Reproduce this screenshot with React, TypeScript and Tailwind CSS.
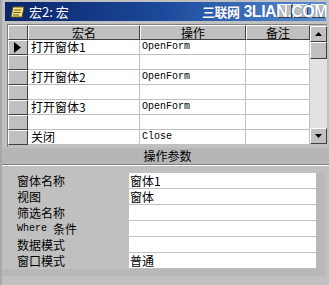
import React from 'react';

const cjk = "font-['SimSun','Noto_Sans_CJK_SC',sans-serif]";

const rows: { name: string; action: string }[] = [
  { name: '打开窗体1', action: 'OpenForm' },
  { name: '', action: '' },
  { name: '打开窗体2', action: 'OpenForm' },
  { name: '', action: '' },
  { name: '打开窗体3', action: 'OpenForm' },
  { name: '', action: '' },
  { name: '关闭', action: 'Close' },
];

const params: { label: string; value: string }[] = [
  { label: '窗体名称', value: '窗体1' },
  { label: '视图', value: '窗体' },
  { label: '筛选名称', value: '' },
  { label: 'Where 条件', value: '' },
  { label: '数据模式', value: '' },
  { label: '窗口模式', value: '普通' },
];

const raised =
  'border border-t-white border-l-white border-r-[#404040] border-b-[#404040] bg-[#c0c0c0]';

const TitleBar = () => (
  <div className="relative mx-[3px] mt-[2px] flex h-[19px] items-center bg-gradient-to-r from-[#0a246a] via-[#1c4a9c] to-[#5a8fd6] pl-[5px]">
    <svg width="16" height="14" viewBox="0 0 16 14" aria-hidden="true">
      <path d="M3 2 L14 2 L12 12 L1 12 Z" fill="#f4e48a" stroke="#6b5a10" strokeWidth="1" />
      <path d="M4 5 H11 M3.5 7.5 H10.5 M3 10 H9" stroke="#6b5a10" strokeWidth="1" />
    </svg>
    <span className={`ml-[3px] text-[13px] leading-none text-white ${cjk}`}>宏2: 宏</span>
    <div className="absolute right-[1px] top-[2px] flex gap-[1px]">
      <div className={`h-[14px] w-[15px] ${raised}`} />
      <div className={`h-[14px] w-[15px] ${raised}`} />
      <div className={`ml-[2px] h-[14px] w-[14px] ${raised}`} />
    </div>
    <span className="absolute left-[197px] top-[1px] z-10 whitespace-nowrap font-['Liberation_Sans',sans-serif] text-[16px] font-bold leading-[17px] tracking-[-0.5px] text-white [text-shadow:0_0_1px_#1a3f8a]">
      <span className={`${cjk} text-[13px]`}>三联网</span> 3LIAN.COM
    </span>
  </div>
);

const Triangle = () => (
  <svg width="8" height="11" viewBox="0 0 8 11" aria-hidden="true">
    <path d="M0 0 L7 5.5 L0 11 Z" fill="#000" />
  </svg>
);

const Grid = () => (
  <div className="ml-[5px] mt-[3px] flex h-[123px] w-[320px] border-l border-t border-[#808080]">
    <div className="flex w-[302px] flex-col bg-[#c0c0c0]">
      <div className="flex h-[15px]">
        <div className={`w-[20px] ${raised}`} />
        {[
          ['宏名', 'w-[112px]'],
          ['操作', 'w-[106px]'],
          ['备注', 'w-[64px]'],
        ].map(([t, w]) => (
          <div key={t} className={`${w} ${raised} flex items-center justify-center text-[12px] leading-none text-black ${cjk}`}>
            {t}
          </div>
        ))}
      </div>
      {rows.map((r, i) => (
        <div key={i} className="flex h-[15px]">
          <div className={`flex w-[20px] items-center justify-center ${raised}`}>{i === 0 && <Triangle />}</div>
          <div className={`flex w-[112px] items-center border-b border-r border-[#c0c0c0] bg-white pl-[3px] text-[12px] leading-none text-black ${cjk}`}>
            {r.name}
          </div>
          <div className="flex w-[106px] items-center border-b border-r border-[#c0c0c0] bg-white pl-[2px] font-['Liberation_Mono',monospace] text-[10px] leading-none text-black">
            {r.action}
          </div>
          <div className="w-[64px] border-b border-r border-[#c0c0c0] bg-white" />
        </div>
      ))}
    </div>
    <div className="flex w-[17px] flex-col pt-[1px]">
      <div className={`flex h-[16px] items-center justify-center ${raised}`}>
        <svg width="7" height="4" viewBox="0 0 7 4" aria-hidden="true">
          <path d="M3.5 0 L7 4 L0 4 Z" fill="#000" />
        </svg>
      </div>
      <div className={`h-[17px] ${raised}`} />
      <div className="flex-1 bg-[#e2e2e2]" />
      <div className={`flex h-[16px] items-center justify-center ${raised}`}>
        <svg width="7" height="4" viewBox="0 0 7 4" aria-hidden="true">
          <path d="M0 0 L7 0 L3.5 4 Z" fill="#000" />
        </svg>
      </div>
      <div className="h-[3px]" />
    </div>
  </div>
);

const Params = () => (
  <div className="flex flex-1 flex-col">
    <div className={`mt-[1px] flex h-[16px] items-center justify-center bg-[#b6b6b6] text-[12px] leading-none text-black ${cjk}`}>
      <span className="ml-[4px]">操作参数</span>
    </div>
    <div className="h-[2px] border-t border-b border-t-[#808080] border-b-white" />
    <div className="flex pt-[7px]">
      <div className="flex flex-1 flex-col pl-[15px]">
        {params.map((p) => (
          <div key={p.label} className="flex h-[16px]">
            <div className={`flex w-[112px] items-center text-[12px] leading-none text-black ${cjk}`}>
              {p.label.startsWith('Where') ? (
                <>
                  <span className="font-['Liberation_Mono',monospace] text-[10px]">Where</span>
                  <span className="ml-[6px]">条件</span>
                </>
              ) : (
                p.label
              )}
            </div>
            <div className={`flex flex-1 items-center border-b border-[#c0c0c0] bg-white pl-[1px] text-[12px] leading-none text-black ${cjk}`}>
              {p.value}
            </div>
          </div>
        ))}
      </div>
      <div className="w-[9px] bg-[#b8b8b8]" />
      <div className="w-[4px]" />
    </div>
    <div className="mr-[4px] h-[7px] bg-[#b8b8b8]" />
  </div>
);

export default function App() {
  return (
    <div className="flex h-[285px] w-[329px] flex-col overflow-hidden border-l-[2px] border-[#a8a8a8] bg-[#c0c0c0]">
      <TitleBar />
      <Grid />
      <Params />
    </div>
  );
}
